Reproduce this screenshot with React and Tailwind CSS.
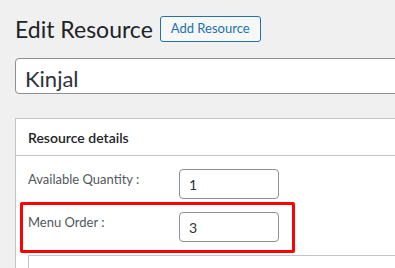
import React from "react";

const fieldBox =
  "w-[100px] h-[30px] border border-[#8c8f94] rounded-[4px] bg-white pl-[9px] flex items-center text-[14px] text-[#2c3338]";

const Row = ({ label, value }) => {
  return (
    <div className="flex items-start">
      <div className="w-[151px] text-[13px] leading-[20px] text-[#50575e]">{label}</div>
      <div className={fieldBox}>{value}</div>
    </div>
  );
};

const App = () => {
  return (
    <div
      className="w-[395px] h-[268px] overflow-hidden bg-[#f0f0f1]"
      style={{ fontFamily: "Lato, 'Open Sans', sans-serif" }}
    >
      <div className="pl-[15px] pt-[16px]">
        <div className="flex items-center h-[26px] gap-[7px]">
          <h1 className="text-[23px] leading-[26px] text-[#1d2327] font-normal">Edit Resource</h1>
          <button className="h-[26px] px-[10px] border border-[#2271b1] rounded-[3px] bg-[#f6f7f7] text-[13px] text-[#2271b1]">
            Add Resource
          </button>
        </div>

        <div className="mt-[16px] w-[420px] h-[36px] border border-[#8c8f94] rounded-[4px] bg-white pl-[9px] pt-[4px] flex items-center text-[22px] text-[#2c3338]">
          Kinjal
        </div>

        {/* metabox */}
        <div className="relative mt-[24px] w-[420px] border border-[#c3c4c7] bg-white">
          <div className="h-[37px] border-b border-[#c3c4c7] px-[12px] flex items-center text-[14px] font-semibold text-[#1d2327]">
            Resource details
          </div>
          <div className="pt-[13px] pl-[12px]">
            <div className="flex flex-col gap-[13px]">
              <Row label="Available Quantity :" value="1" />
              <Row label="Menu Order :" value="3" />
            </div>
            <div className="mt-[13px] h-[40px] border border-[#c3c4c7] bg-white"></div>
          </div>

          {/* highlight drawn over the row */}
          <div className="absolute left-[4px] top-[83px] w-[275px] h-[51px] border-[3px] border-[#ff0000] rounded-[2px]"></div>
        </div>
      </div>
    </div>
  );
};

export default App;
